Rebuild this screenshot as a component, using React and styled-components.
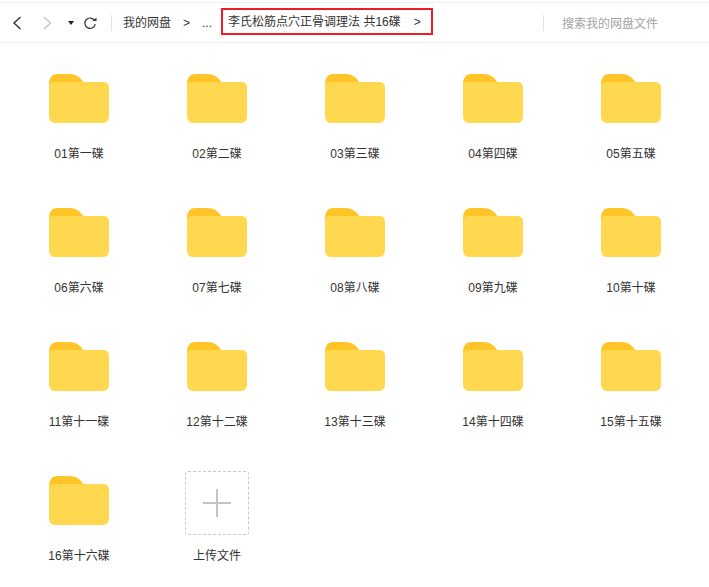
import React from "react";
import styled, { createGlobalStyle } from "styled-components";

const Global = createGlobalStyle`
  html, body { margin: 0; padding: 0; background: #fff; }
  body { font-family: "Liberation Sans", "Noto Sans CJK SC", sans-serif; overflow: hidden; }
`;
const Page = styled.div`width: 709px; height: 587px; padding-top: 2px; box-sizing: border-box; background: #fff;`;
const Toolbar = styled.header`
  height: 41px; box-sizing: border-box; display: flex; align-items: center;
  border-top: 1px solid #efefef; border-bottom: 1px solid #efefef; color: #333;
`;
const NavIcon = styled.svg`display: block; flex: none; margin-left: ${p => p.$ml || 0}px;`;
const Nav = styled.div`display: flex; align-items: center; width: 111px; padding-left: 11px; box-sizing: border-box; flex: none;`;
const Divider = styled.span`width: 1px; height: 16px; background: #e2e2e2; flex: none;`;
const Crumb = styled.span`font-size: 12px; line-height: 16px; white-space: nowrap; color: #333; margin-left: ${p => p.$ml || 0}px;`;
const Highlight = styled.div`
  margin-left: 9px; width: 212px; height: 27px; box-sizing: border-box; border: 2px solid #ee1c25;
  display: flex; align-items: center; padding-left: 5px; flex: none; margin-top: -2px;
`;
const Search = styled.div`
  margin-left: 110px; display: flex; align-items: center; font-size: 12px; color: #a3a3a3; white-space: nowrap;
`;
const SearchText = styled.span`margin-left: 18px;`;
const Grid = styled.main`
  display: grid; grid-template-columns: repeat(5, 138px); grid-auto-rows: 134px; padding: 31px 0 0 10px;
`;
const Item = styled.div`display: flex; flex-direction: column; align-items: center;`;
const IconBox = styled.div`height: 64px; display: flex; align-items: flex-start; justify-content: center;`;
const Label = styled.span`font-size: 12px; line-height: 16px; color: #333; margin-top: 8px; white-space: nowrap;`;
const Upload = styled.div`
  width: 64px; height: 64px; margin-top: -5px; box-sizing: border-box; border: 1px dashed #c9c9c9; border-radius: 3px;
  display: flex; align-items: center; justify-content: center;
`;

const Folder = () => (
  <svg width="60" height="50" viewBox="0 0 60 50">
    <path d="M0 10C0 4 3 0 8 0H20C27 0 31 3 35 9V14H0Z" fill="#ffc528" />
    <path d="M0 12C0 9 2 8 5 8H54C58 8 60 10 60 14V42C60 46 58 49 54 49H6C2 49 0 46 0 42Z" fill="#ffd84f" />
  </svg>
);

const names = ["01第一碟","02第二碟","03第三碟","04第四碟","05第五碟","06第六碟","07第七碟","08第八碟","09第九碟","10第十碟","11第十一碟","12第十二碟","13第十三碟","14第十四碟","15第十五碟","16第十六碟"];

export default function App() {
  return (
    <Page>
      <Global />
      <Toolbar>
        <Nav>
          <NavIcon width="12" height="16" viewBox="0 0 12 16"><path d="M9.5 2L3 8l6.5 6" fill="none" stroke="#333" strokeWidth="1.4" /></NavIcon>
          <NavIcon $ml={18} width="12" height="16" viewBox="0 0 12 16"><path d="M3 2l6.5 6L3 14" fill="none" stroke="#c4c4c4" strokeWidth="1.4" /></NavIcon>
          <NavIcon $ml={14} width="8" height="6" viewBox="0 0 8 6"><path d="M1 1h6L4 5z" fill="#222" /></NavIcon>
          <NavIcon $ml={8} width="14" height="14" viewBox="0 0 14 14"><path d="M11.5 4.5A5.2 5.2 0 1 0 12.2 8" fill="none" stroke="#333" strokeWidth="1.2" /><path d="M9.5 5h4V1.5z" fill="#333" /></NavIcon>
        </Nav>
        <Divider />
        <Crumb $ml={11}>我的网盘</Crumb>
        <Crumb $ml={12}>&gt;</Crumb>
        <Crumb $ml={12}>...</Crumb>
        <Highlight>
          <Crumb>李氏松筋点穴正骨调理法 共16碟</Crumb>
          <Crumb $ml={13}>&gt;</Crumb>
        </Highlight>
        <Search>
          <Divider />
          <SearchText>搜索我的网盘文件</SearchText>
        </Search>
      </Toolbar>
      <Grid>
        {names.map(n => (
          <Item key={n}>
            <IconBox><Folder /></IconBox>
            <Label>{n}</Label>
          </Item>
        ))}
        <Item>
          <IconBox>
            <Upload>
              <svg width="28" height="28" viewBox="0 0 28 28"><path d="M14 0v28M0 14h28" stroke="#c4c4c4" strokeWidth="2" /></svg>
            </Upload>
          </IconBox>
          <Label>上传文件</Label>
        </Item>
      </Grid>
    </Page>
  );
}
